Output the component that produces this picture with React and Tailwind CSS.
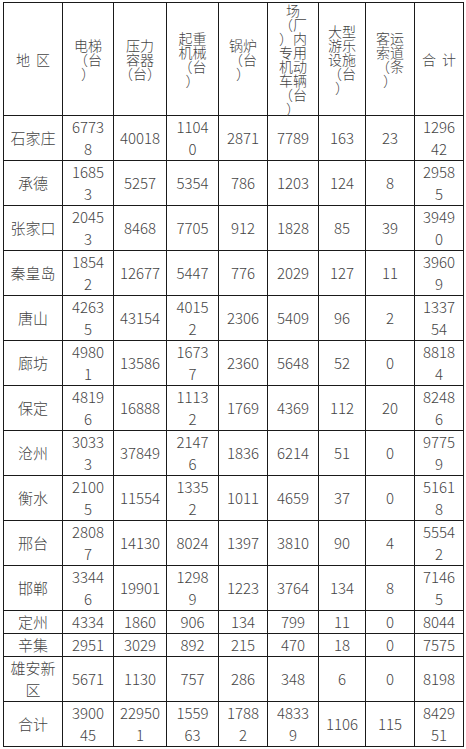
const headers = [
  '地\u00a0 区',
  '电梯\n（台\n）',
  '压力\n容器\n（台）',
  '起重\n机械\n（台\n）',
  '锅炉\n（台\n）',
  '场\n（厂\n）内\n专用\n机动\n车辆\n（台\n）',
  '大型\n游乐\n设施\n（台\n）',
  '客运\n索道\n（条\n）',
  '合\u00a0 计',
]

const rows = [
  ['石家庄', '6773\n8', '40018', '1104\n0', '2871', '7789', '163', '23', '1296\n42'],
  ['承德', '1685\n3', '5257', '5354', '786', '1203', '124', '8', '2958\n5'],
  ['张家口', '2045\n3', '8468', '7705', '912', '1828', '85', '39', '3949\n0'],
  ['秦皇岛', '1854\n2', '12677', '5447', '776', '2029', '127', '11', '3960\n9'],
  ['唐山', '4263\n5', '43154', '4015\n2', '2306', '5409', '96', '2', '1337\n54'],
  ['廊坊', '4980\n1', '13586', '1673\n7', '2360', '5648', '52', '0', '8818\n4'],
  ['保定', '4819\n6', '16888', '1113\n2', '1769', '4369', '112', '20', '8248\n6'],
  ['沧州', '3033\n3', '37849', '2147\n6', '1836', '6214', '51', '0', '9775\n9'],
  ['衡水', '2100\n5', '11554', '1335\n2', '1011', '4659', '37', '0', '5161\n8'],
  ['邢台', '2808\n7', '14130', '8024', '1397', '3810', '90', '4', '5554\n2'],
  ['邯郸', '3344\n6', '19901', '1298\n9', '1223', '3764', '134', '8', '7146\n5'],
  ['定州', '4334', '1860', '906', '134', '799', '11', '0', '8044'],
  ['辛集', '2951', '3029', '892', '215', '470', '18', '0', '7575'],
  ['雄安新\n区', '5671', '1130', '757', '286', '348', '6', '0', '8198'],
  ['合计', '3900\n45', '22950\n1', '1559\n63', '1788\n2', '4833\n9', '1106', '115', '8429\n51'],
]

const colWidths = ['w-[59px]', 'w-[51px]', 'w-[53px]', 'w-[52px]', 'w-[49px]', 'w-[51px]', 'w-[47px]', 'w-[49px]', 'w-[49px]']

export default function App() {
  return (
    <div
      className="min-h-screen bg-white pl-[3px] pt-[2px] text-[#444]"
      style={{ fontFamily: '"Noto Sans CJK SC", "Noto Sans", sans-serif' }}
    >
      <table className="table-fixed border-collapse border border-[#1a1a1a] w-[461px] text-[15px] font-light">
        <colgroup>
          {colWidths.map((w, i) => (
            <col key={i} className={w} />
          ))}
        </colgroup>
        <thead>
          <tr className="h-[113px]">
            {headers.map((h, i) => (
              <th
                key={i}
                className="border border-[#1a1a1a] p-0 font-light text-center align-middle whitespace-pre-line text-[14px] leading-[14px]"
              >
                {h}
              </th>
            ))}
          </tr>
        </thead>
        <tbody>
          {rows.map((row, r) => (
            <tr key={r}>
              {row.map((cell, c) => (
                <td
                  key={c}
                  className="border border-[#1a1a1a] p-0 text-center align-middle whitespace-pre-line leading-[22px]"
                >
                  {cell}
                </td>
              ))}
            </tr>
          ))}
        </tbody>
      </table>
    </div>
  )
}
